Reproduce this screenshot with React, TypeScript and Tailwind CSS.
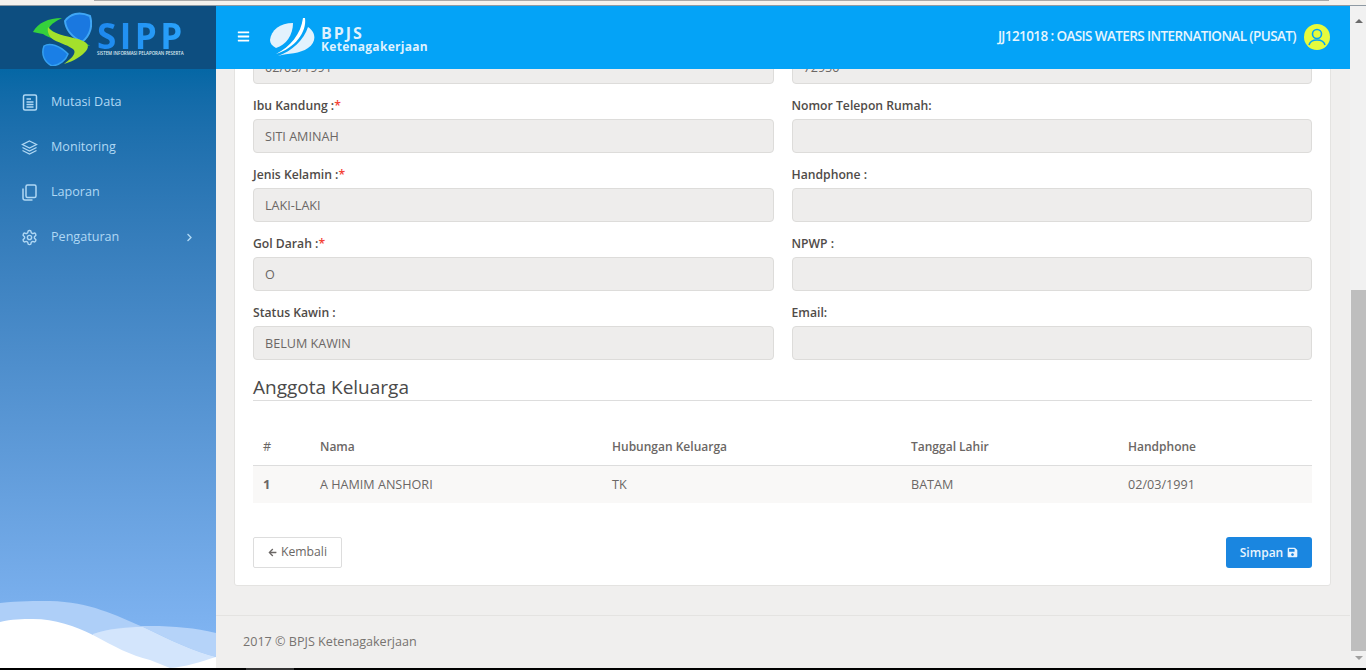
import type { ReactNode } from "react";
import { FaBars, FaArrowLeft, FaSave, FaChevronRight } from "react-icons/fa";
import { LuSettings } from "react-icons/lu";

const FileIcon = () => (
  <svg width="16" height="17" viewBox="0 0 16 17" fill="none" stroke="currentColor" strokeWidth="1.5">
    <rect x="1.5" y="1" width="13" height="15" rx="1.5" />
    <path d="M4.5 5H9M4.5 8H11.5M4.5 10.5H11.5M4.5 13H11.5" />
  </svg>
);

const LayersIcon = () => (
  <svg width="17" height="15" viewBox="0 0 17 15" fill="none" stroke="currentColor" strokeWidth="1.3">
    <path d="M8.5 1L15.5 4.5L8.5 8L1.5 4.5Z" />
    <path d="M1.5 7.5L8.5 11L15.5 7.5" />
    <path d="M1.5 10.5L8.5 14L15.5 10.5" />
  </svg>
);

const PagesIcon = () => (
  <svg width="15" height="17" viewBox="0 0 15 17" fill="none" stroke="currentColor" strokeWidth="1.5">
    <rect x="4" y="1" width="10" height="12.5" rx="1.5" />
    <path d="M1 4.5V14C1 15.2 1.8 16 3 16H10.5" />
  </svg>
);

const menus: { label: string; icon: ReactNode; arrow?: boolean }[] = [
  { label: "Mutasi Data", icon: <FileIcon /> },
  { label: "Monitoring", icon: <LayersIcon /> },
  { label: "Laporan", icon: <PagesIcon /> },
  { label: "Pengaturan", icon: <LuSettings />, arrow: true },
];

const rows = [
  [
    { label: "Ibu Kandung :", req: true, value: "SITI AMINAH" },
    { label: "Nomor Telepon Rumah:", value: "" },
  ],
  [
    { label: "Jenis Kelamin :", req: true, value: "LAKI-LAKI" },
    { label: "Handphone :", value: "" },
  ],
  [
    { label: "Gol Darah :", req: true, value: "O" },
    { label: "NPWP :", value: "" },
  ],
  [
    { label: "Status Kawin :", value: "BELUM KAWIN" },
    { label: "Email:", value: "" },
  ],
];

const Field = ({ value }: { value: string }) => (
  <div className="h-[34px] rounded-[4px] border border-[#dddcda] bg-[#eeedec] px-[11px] text-[12.6px] leading-[33px] text-[#6b6765]">
    {value}
  </div>
);

const SippLogo = () => (
  <svg width="60" height="56" viewBox="0 0 60 56" className="shrink-0">
    <path d="M33 11C38 4 47 1 58 6C61 16 58 26 50 32C42 28 34 22 33 11Z" fill="#1a78e0" stroke="#3fa6f5" strokeWidth="2" />
    <path d="M12 36C18 32 28 36 36 44C34 50 28 55 20 56C12 52 9 44 12 36Z" fill="#1a7fe6" stroke="#35a0f0" strokeWidth="1.5" />
    <path d="M1 22C6 13 16 8 30 8C24 11 19 14 17 18C22 24 34 27 44 30C50 32 56 34 58 36C52 35 46 34 38 33C26 31 17 28 11 24C7 23 4 23 1 22Z" fill="#35d13c" />
    <path d="M16 17C20 24 34 26 46 29C56 32 58 36 54 41C50 46 42 51 32 54C40 48 44 44 42 40C38 36 28 33 22 30C17 27 15 22 16 17Z" fill="#a4e02c" />
  </svg>
);

const BpjsMark = () => (
  <svg width="46" height="38" viewBox="0 0 46 38" className="shrink-0">
    <path d="M0 22C1 12 10 5 23 5C23 17 16 27 6 30C2 28 0 25 0 22Z" fill="#e3f2fd" />
    <path d="M35 0C37 14 25 30 6 36C20 29 31 16 33 0Z" fill="#ffffff" />
    <path d="M38 9C46 14 47 24 38 30C30 36 18 35 8 38C22 33 34 22 38 9Z" fill="#e3f2fd" />
  </svg>
);

export default function App() {
  return (
    <div className="flex h-[670px] w-[1366px] flex-col overflow-hidden bg-[#f0efee] font-['Open_Sans',sans-serif]">
      {/* browser strip */}
      <div className="h-[6px] shrink-0 border-b border-[#8f9aa3] bg-[#f4f2ee]">
        <div className="ml-[94px] h-px w-[1235px] bg-[#a9a9a9]" />
      </div>

      <div className="flex min-h-0 flex-1">
        {/* sidebar */}
        <aside className="relative flex w-[216px] shrink-0 flex-col">
          <div className="flex h-[63px] shrink-0 items-center gap-[5px] bg-[#0d4e80] pl-[32px]">
            <SippLogo />
            <div className="flex w-[88px] flex-col pt-[3px]">
              <span className="bg-gradient-to-r from-[#1e88ee] to-[#2aa3fb] bg-clip-text text-[35px] leading-[28px] font-bold tracking-[3.5px] text-transparent">
                SIPP
              </span>
              <span className="text-[4.4px] leading-[6px] font-semibold whitespace-nowrap text-[#dfeaf2]">
                SISTEM INFORMASI PELAPORAN PESERTA
              </span>
            </div>
          </div>
          <nav className="flex-1 bg-gradient-to-b from-[#0567a5] to-[#85b8f6] pt-[11px]">
            {menus.map((m) => (
              <div key={m.label} className="flex h-[45px] items-center pr-[22px] pl-[21px] text-[12.6px] text-[#b0d8f4]">
                <span className="mr-[13px] flex w-[17px] justify-center text-[17px]">{m.icon}</span>
                <span className="flex-1">{m.label}</span>
                {m.arrow && <FaChevronRight className="text-[9px]" />}
              </div>
            ))}
          </nav>
          <svg className="absolute right-0 bottom-0 left-0" width="216" height="68" viewBox="0 0 216 68">
            <path d="M0 3C20 1 35 1 50 1C90 2 115 15 143 27C170 40 195 52 216 57V68H0Z" fill="#aecff8" />
            <path d="M93 34C110 28 130 26 150 26C175 26 195 28 216 33V57C195 52 170 40 143 27L93 34Z" fill="#b5d3f9" />
            <path d="M93 34C108 29 125 27 143 27C170 40 195 52 216 57V68H93Z" fill="#d3e5fc" />
            <path d="M0 22C12 19 22 19 33 19C55 19 75 26 93 35C115 47 130 55 150 60L170 68H0Z" fill="#ffffff" />
            <path d="M170 68C185 67 200 62 216 57V68Z" fill="#ffffff" />
          </svg>
        </aside>

        <div className="flex min-w-0 flex-1">
          <div className="flex min-w-0 flex-1 flex-col">
            {/* top bar */}
            <header className="flex h-[63px] shrink-0 items-center bg-[#04a3f7] pr-[20px] pb-[2px] pl-[21px] text-white">
              <FaBars className="text-[13px]" />
              <div className="ml-[20px] flex items-center gap-[5px]">
                <BpjsMark />
                <div className="mt-[4px] flex flex-col text-[#dff1fe]">
                  <span className="text-[16px] leading-[18px] font-bold tracking-[2px]">BPJS</span>
                  <span className="-mt-[2px] text-[12px] leading-[14px] font-bold tracking-[0.3px]">Ketenagakerjaan</span>
                </div>
              </div>
              <span className="ml-auto text-[13.5px] font-semibold tracking-[-0.6px] text-[#e6f5fe]">
                JJ121018 : OASIS WATERS INTERNATIONAL (PUSAT)
              </span>
              <svg className="ml-[8px]" width="26" height="26" viewBox="0 0 26 26" fill="none">
                <circle cx="13" cy="13" r="13" fill="#e6fb3d" />
                <circle cx="13" cy="10" r="4.5" stroke="#04a3f7" strokeWidth="1.6" />
                <path d="M5 21C6 17 9 16 13 16C17 16 20 17 21 21" stroke="#04a3f7" strokeWidth="1.6" />
              </svg>
            </header>

            {/* scrolled content */}
            <div className="flex min-h-0 flex-1 flex-col overflow-hidden">
              <div className="-mt-[20px] mr-[19px] ml-[18px] h-[537px] shrink-0 rounded-[3px] border border-[#e4e3e1] bg-white px-[18px]">
                <div className="grid grid-cols-2 gap-x-[18px]">
                  <Field value="02/03/1991" />
                  <Field value="72950" />
                </div>
                {rows.map((row) => (
                  <div key={row[0].label} className="mt-[10px] grid h-[59px] grid-cols-2 gap-x-[18px]">
                    {row.map((f) => (
                      <div key={f.label}>
                        <div className="mb-[2px] text-[12.2px] leading-[23px] font-semibold text-[#4f4b48]">
                          {f.label}
                          {f.req && <span className="text-[#f44336]">*</span>}
                        </div>
                        <Field value={f.value} />
                      </div>
                    ))}
                  </div>
                ))}
                <div className="mt-[15px] border-b border-[#dddddd] text-[19px] leading-[25px] text-[#4a4a4a]">
                  Anggota Keluarga
                </div>
                <table className="mt-[27px] w-full table-fixed text-[12.6px] text-[#6b6765]">
                  <thead>
                    <tr className="h-[37px] border-b border-[#dddddd] text-left">
                      <th className="w-[67px] pt-[2px] pl-[10px] font-normal">#</th>
                      <th className="w-[292px] pt-[2px] text-[12px] font-semibold">Nama</th>
                      <th className="w-[299px] pt-[2px] text-[12px] font-semibold">Hubungan Keluarga</th>
                      <th className="w-[217px] pt-[2px] text-[12px] font-semibold">Tanggal Lahir</th>
                      <th className="pt-[2px] text-[12px] font-semibold">Handphone</th>
                    </tr>
                  </thead>
                  <tbody>
                    <tr className="h-[38px] bg-[#f9f8f7]">
                      <td className="pl-[10px] text-[13px] font-bold">1</td>
                      <td className="pt-[2px]">A HAMIM ANSHORI</td>
                      <td className="pt-[2px]">TK</td>
                      <td className="pt-[2px]">BATAM</td>
                      <td className="pt-[2px]">02/03/1991</td>
                    </tr>
                  </tbody>
                </table>
                <div className="mt-[34px] flex items-center justify-between">
                  <button className="flex h-[31px] w-[89px] items-center justify-center gap-[4px] rounded-[2px] border border-[#dddddd] bg-white text-[12.2px] text-[#6b6765]">
                    <FaArrowLeft className="text-[9px]" />
                    Kembali
                  </button>
                  <button className="flex h-[31px] w-[86px] items-center justify-center gap-[4px] rounded-[3px] bg-[#1a86e0] text-[12px] font-semibold text-[#e8f4fe]">
                    Simpan
                    <FaSave className="text-[11px]" />
                  </button>
                </div>
              </div>
              <footer className="mt-[29px] flex-1 border-t border-[#e4e3e1] pt-[16px] pl-[27px] text-[12.6px] leading-[20px] text-[#777370]">
                2017 © BPJS Ketenagakerjaan
              </footer>
            </div>
          </div>

          {/* window scrollbar */}
          <div className="flex w-[16px] shrink-0 flex-col bg-[#f1f1f1] pl-px">
            <div className="flex h-[17px] shrink-0 items-end justify-center">
              <div className="h-0 w-0 border-x-[4px] border-b-[4px] border-x-transparent border-b-[#6a6a6a]" />
            </div>
            <div className="mt-[267px] h-[361px] bg-[#bebebe]" />
            <div className="mt-[5px] flex justify-center">
              <div className="h-0 w-0 border-x-[4px] border-t-[4px] border-x-transparent border-t-[#a0a0a0]" />
            </div>
          </div>
        </div>
      </div>
      <div className="h-[2px] shrink-0 bg-black">
        <div className="ml-[246px] h-full w-[48px] bg-[#333333]" />
      </div>
    </div>
  );
}
